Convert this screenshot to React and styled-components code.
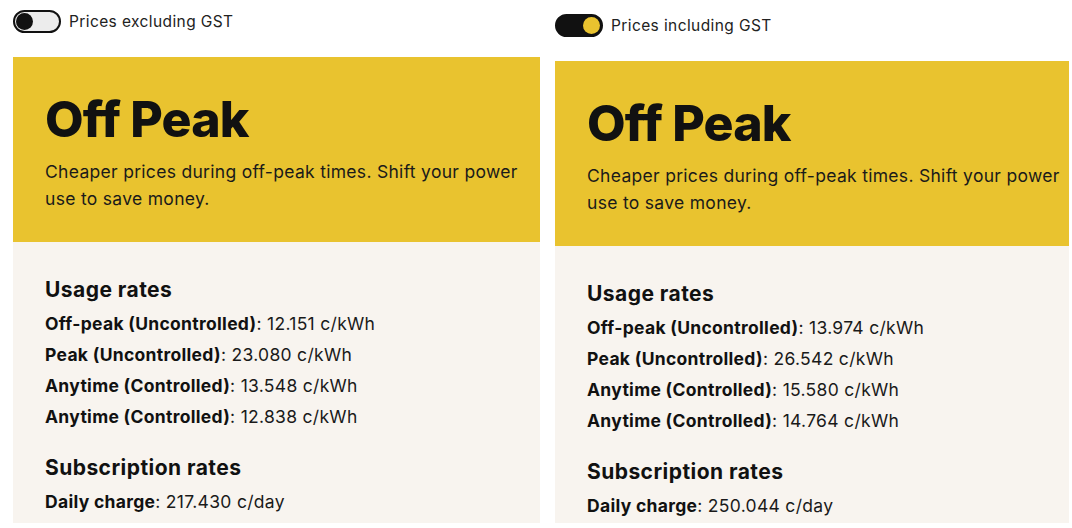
import React from "react"
import styled, { createGlobalStyle } from "styled-components"

const yellow = "#e9c32f"
const cream = "#f8f4ef"
const ink = "#111111"

const GlobalStyle = createGlobalStyle`
  html, body {
    margin: 0;
    padding: 0;
    background: #ffffff;
    overflow: hidden;
  }
  body {
    font-family: Inter, "Noto Sans", Arial, sans-serif;
    color: ${ink};
  }
`

const Page = styled.div`
  display: grid;
  grid-template-columns: 527px 514px;
  column-gap: 15px;
  padding: 0 0 5px 13px;
  height: 528px;
  box-sizing: border-box;
`

const Column = styled.div`
  display: flex;
  flex-direction: column;
  padding-top: ${(p) => p.$offset}px;
  min-height: 0;
`

const ToggleRow = styled.label`
  display: flex;
  align-items: center;
  gap: 8px;
  height: 23px;
  font-size: 15.5px;
  letter-spacing: 0.4px;
  color: #222;
  margin-bottom: 24px;
`

const Track = styled.span`
  position: relative;
  width: 48px;
  height: 23px;
  box-sizing: border-box;
  border: 2px solid ${ink};
  border-radius: 12px;
  background: ${(p) => (p.$on ? ink : "#ececec")};
  flex-shrink: 0;
`

const Knob = styled.span`
  position: absolute;
  top: 1px;
  left: ${(p) => (p.$on ? "26px" : "1px")};
  width: 17px;
  height: 17px;
  border-radius: 50%;
  background: ${(p) => (p.$on ? yellow : ink)};
`

const Card = styled.div`
  flex: 1;
  display: flex;
  flex-direction: column;
  overflow: hidden;
  min-height: 0;
`

const Header = styled.div`
  background: ${yellow};
  padding: 32px 16px 30px 32px;
`

const Title = styled.h1`
  margin: 0 0 9px;
  font-size: 50px;
  line-height: 60px;
  font-weight: 800;
  letter-spacing: -0.8px;
`

const Intro = styled.p`
  margin: 0;
  font-size: 17.5px;
  line-height: 27px;
  letter-spacing: 0.3px;
  color: #1a1a1a;
  white-space: nowrap;
`

const Body = styled.div`
  flex: 1;
  background: ${cream};
  padding: 33px 16px 0 32px;
`

const Section = styled.div`
  margin-bottom: 21px;
`

const SectionTitle = styled.h3`
  margin: 0 0 3px;
  font-size: 21px;
  line-height: 30px;
  font-weight: 700;
  letter-spacing: 0.45px;
`

const Rate = styled.div`
  font-size: 17.5px;
  line-height: 31px;
  letter-spacing: 0.3px;
  color: #1a1a1a;
  white-space: nowrap;

  strong {
    font-weight: 700;
    color: ${ink};
  }
`

const plans = [
  {
    label: "Prices excluding GST",
    on: false,
    offset: 10,
    usage: ["12.151", "23.080", "13.548", "12.838"],
    daily: "217.430",
  },
  {
    label: "Prices including GST",
    on: true,
    offset: 14,
    usage: ["13.974", "26.542", "15.580", "14.764"],
    daily: "250.044",
  },
]

const usageNames = [
  "Off-peak (Uncontrolled)",
  "Peak (Uncontrolled)",
  "Anytime (Controlled)",
  "Anytime (Controlled)",
]

const PlanColumn = ({ plan }) => (
  <Column $offset={plan.offset}>
    <ToggleRow>
      <Track $on={plan.on}>
        <Knob $on={plan.on} />
      </Track>
      {plan.label}
    </ToggleRow>
    <Card>
      <Header>
        <Title>Off Peak</Title>
        <Intro>
          Cheaper prices during off-peak times. Shift your power
          <br />
          use to save money.
        </Intro>
      </Header>
      <Body>
        <Section>
          <SectionTitle>Usage rates</SectionTitle>
          {plan.usage.map((value, i) => (
            <Rate key={i}>
              <strong>{usageNames[i]}</strong>: {value} c/kWh
            </Rate>
          ))}
        </Section>
        <Section>
          <SectionTitle>Subscription rates</SectionTitle>
          <Rate>
            <strong>Daily charge</strong>: {plan.daily} c/day
          </Rate>
        </Section>
      </Body>
    </Card>
  </Column>
)

export default function App() {
  return (
    <>
      <GlobalStyle />
      <Page>
        {plans.map((plan) => (
          <PlanColumn key={plan.label} plan={plan} />
        ))}
      </Page>
    </>
  )
}
